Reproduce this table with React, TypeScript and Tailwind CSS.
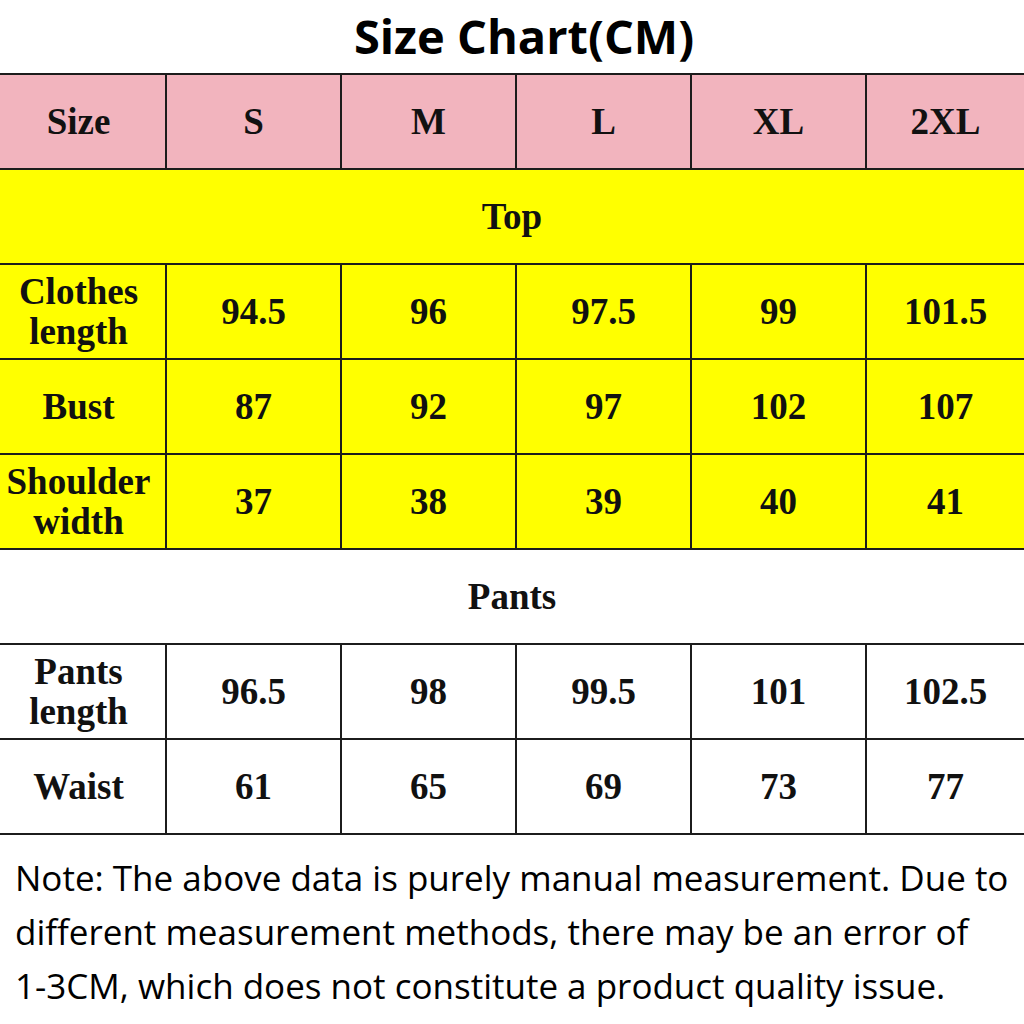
import React from "react";

const sizes = ["S", "M", "L", "XL", "2XL"];

type Row = { label: string[]; values: string[] };

const topRows: Row[] = [
  { label: ["Clothes", "length"], values: ["94.5", "96", "97.5", "99", "101.5"] },
  { label: ["Bust"], values: ["87", "92", "97", "102", "107"] },
  { label: ["Shoulder", "width"], values: ["37", "38", "39", "40", "41"] },
];

const pantsRows: Row[] = [
  { label: ["Pants", "length"], values: ["96.5", "98", "99.5", "101", "102.5"] },
  { label: ["Waist"], values: ["61", "65", "69", "73", "77"] },
];

const cell = "h-[95px] border-2 border-[#1c1c1c] text-center align-middle p-0";

function Label({ lines }: { lines: string[] }) {
  return (
    <div className="flex flex-col items-center pr-[8px] leading-[40px]">
      {lines.map((l) => (
        <span className="whitespace-nowrap" key={l}>
          {l}
        </span>
      ))}
    </div>
  );
}

function DataRow({ row, bg }: { row: Row; bg: string }) {
  return (
    <tr className={bg}>
      <td className={`${cell} border-l-0`}>
        <Label lines={row.label} />
      </td>
      {row.values.map((v, i) => (
        <td className={`${cell} ${i === 4 ? "border-r-0" : ""}`} key={i}>
          {v}
        </td>
      ))}
    </tr>
  );
}

export default function App() {
  return (
    <div className="h-[1024px] w-[1024px] overflow-hidden bg-white">
      <h1 className="h-[73px] pt-[6px] pl-[24px] text-center font-['Open_Sans',sans-serif] text-[47px] font-bold leading-[60px] text-black">
        Size Chart(CM)
      </h1>

      <table className="w-[1024px] table-fixed border-collapse font-['Liberation_Serif',serif] text-[37px] font-bold text-[#111]">
        <colgroup>
          <col className="w-[166px]" />
          <col className="w-[175px]" />
          <col className="w-[175px]" />
          <col className="w-[175px]" />
          <col className="w-[175px]" />
          <col />
        </colgroup>
        <tbody>
          <tr className="bg-[#f2b4be]">
            <td className={`${cell} border-l-0`}>
              <Label lines={["Size"]} />
            </td>
            {sizes.map((s, i) => (
              <td className={`${cell} ${i === 4 ? "border-r-0" : ""}`} key={s}>
                {s}
              </td>
            ))}
          </tr>
          <tr className="bg-[#ffff00]">
            <td className={`${cell} border-x-0`} colSpan={6}>
              Top
            </td>
          </tr>
          {topRows.map((r) => (
            <DataRow bg="bg-[#ffff00]" key={r.label[0]} row={r} />
          ))}
          <tr className="bg-white">
            <td className={`${cell} border-x-0`} colSpan={6}>
              Pants
            </td>
          </tr>
          {pantsRows.map((r) => (
            <DataRow bg="bg-white" key={r.label[0]} row={r} />
          ))}
        </tbody>
      </table>

      <p className="whitespace-nowrap px-[15px] pt-[16px] font-['Open_Sans',sans-serif] text-[35px] leading-[54px] text-black">
        Note: The above data is purely manual measurement. Due to
        <br />
        different measurement methods, there may be an error of
        <br />
        1-3CM, which does not constitute a product quality issue.
      </p>
    </div>
  );
}
